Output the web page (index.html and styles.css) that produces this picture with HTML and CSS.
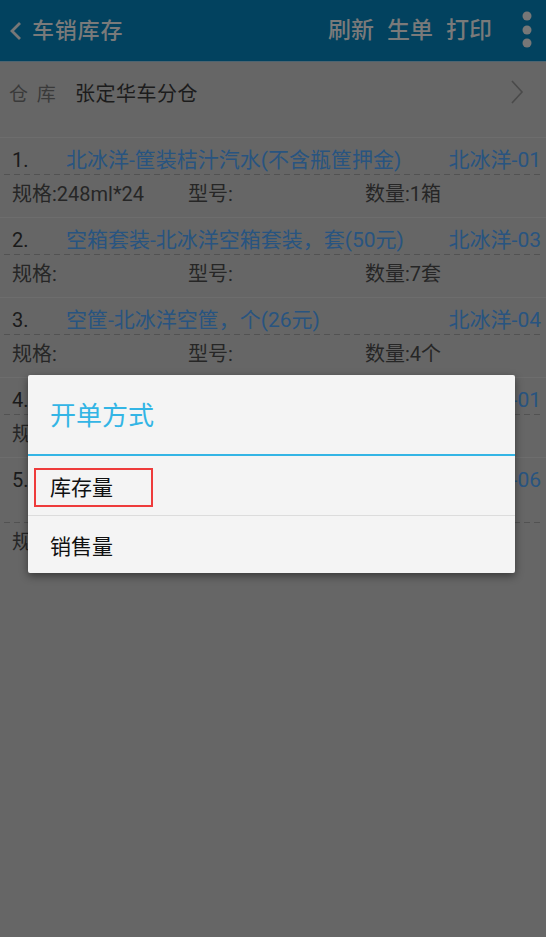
FILE: index.html
```html
<!DOCTYPE html>
<html lang="zh">
<head>
<meta charset="utf-8">
<title>车销库存</title>
<link rel="stylesheet" href="styles.css">
</head>
<body>
<div class="app">
  <header class="bar">
    <div class="bar-left">
      <svg class="back" width="14" height="20" viewBox="0 0 14 20"><polyline points="11,2 3,10 11,18" fill="none" stroke="#777777" stroke-width="2.8"/></svg>
      <span class="bar-title">车销库存</span>
    </div>
    <div class="bar-actions">
      <span>刷新</span><span>生单</span><span>打印</span>
      <svg class="more" width="10" height="38" viewBox="0 0 10 38"><circle cx="5" cy="5" r="4.5" fill="#777777"/><circle cx="5" cy="19" r="4.5" fill="#777777"/><circle cx="5" cy="32" r="4.5" fill="#777777"/></svg>
    </div>
  </header>

  <div class="store">
    <span class="store-label">仓 库</span>
    <span class="store-name">张定华车分仓</span>
    <svg class="store-arrow" width="14" height="26" viewBox="0 0 14 26"><polyline points="2,2 12,13 2,24" fill="none" stroke="#4a4a4a" stroke-width="1.6"/></svg>
  </div>

  <div class="list">
    <div class="item">
      <div class="head"><span class="no">1.</span><span class="name">北冰洋-筐装桔汁汽水(不含瓶筐押金)</span><span class="code">北冰洋-01</span></div>
      <div class="dash"></div>
      <div class="spec"><span class="c1">规格:248ml*24</span><span class="c2">型号:</span><span class="c3">数量:1箱</span></div>
    </div>
    <div class="item">
      <div class="head"><span class="no">2.</span><span class="name">空箱套装-北冰洋空箱套装，套(50元)</span><span class="code">北冰洋-03</span></div>
      <div class="dash"></div>
      <div class="spec"><span class="c1">规格:</span><span class="c2">型号:</span><span class="c3">数量:7套</span></div>
    </div>
    <div class="item">
      <div class="head"><span class="no">3.</span><span class="name">空筐-北冰洋空筐，个(26元)</span><span class="code">北冰洋-04</span></div>
      <div class="dash"></div>
      <div class="spec"><span class="c1">规格:</span><span class="c2">型号:</span><span class="c3">数量:4个</span></div>
    </div>
    <div class="item">
      <div class="head"><span class="no">4.</span><span class="name">北冰洋-瓶装桔汁汽水</span><span class="code">北冰洋-01</span></div>
      <div class="dash"></div>
      <div class="spec"><span class="c1">规格:</span><span class="c2">型号:</span><span class="c3">数量:2箱</span></div>
    </div>
    <div class="item">
      <div class="head"><span class="no">5.</span><span class="name">北冰洋-玻璃瓶装橙汁汽水(不含瓶筐押金)，箱</span><span class="code">北冰洋-06</span></div>
      <div class="dash"></div>
      <div class="spec"><span class="c1">规格:</span><span class="c2">型号:</span><span class="c3">数量:1箱</span></div>
    </div>
  </div>

  <div class="dialog">
    <div class="dialog-title">开单方式</div>
    <div class="dialog-item">库存量</div>
    <div class="dialog-item">销售量</div>
    <div class="mark"></div>
  </div>
</div>
</body>
</html>
```

FILE: styles.css
```css
* { box-sizing: border-box; }
html, body { margin: 0; padding: 0; }
body {
  width: 546px;
  height: 937px;
  overflow: hidden;
  background: #666666;
  font-family: Roboto, "Noto Sans CJK SC", sans-serif;
}
.app { position: relative; width: 546px; height: 937px; background: #666666; }

.bar {
  height: 62px;
  background: #02425f;
  border-bottom: 1px solid #4d6470;
  display: flex;
  align-items: center;
  justify-content: space-between;
  color: #7a7a7a;
}
.bar-left { display: flex; align-items: center; padding-left: 9px; }
.back { margin-right: 9px; margin-top: 1px; }
.bar-title { font-size: 22px; line-height: 28px; font-weight: 500; letter-spacing: 0.8px; }
.bar-actions { display: flex; align-items: center; gap: 13px; font-size: 23px; line-height: 28px; font-weight: 500; padding-right: 14px; }
.bar-actions .more { margin-left: 17px; margin-top: -2px; }

.store {
  height: 60px;
  display: flex;
  align-items: center;
  padding: 0 22px 0 9px;
}
.store-label { font-size: 19px; color: #3a3a3a; width: 66px; word-spacing: 4px; }
.store-name { font-size: 20px; color: #1c1c1c; flex: 1; letter-spacing: 0.5px; }

.list { margin-top: 15px; }
.item {
  border-top: 1px solid #6d6d6d;
  padding: 8px 5px 9px 12px;
}
.head { display: flex; align-items: flex-start; font-size: 21px; line-height: 28px; }
.no { width: 54px; flex: none; color: #1a1a1a; font-size: 20px; }
.name { flex: 1; color: #285480; padding-right: 30px; }
.code { flex: none; color: #285480; }
.dash {
  height: 1px;
  margin-left: -8px;
  background: repeating-linear-gradient(to right, #525252 0 6px, transparent 6px 10px);
}
.spec { display: flex; font-size: 20px; line-height: 28px; padding-top: 5px; color: #262626; }
.c1 { width: 176px; }
.c2 { width: 177px; }
.c3 { flex: 1; }

.dialog {
  position: absolute;
  left: 28px;
  top: 375px;
  width: 487px;
  background: #f4f4f4;
  border-radius: 2px;
  box-shadow: 0 3px 8px rgba(0,0,0,0.45);
}
.dialog-title {
  height: 81px;
  padding: 24px 0 0 22px;
  font-size: 26px;
  line-height: 34px;
  color: #33b5e5;
  border-bottom: 2px solid #33b5e5;
}
.dialog-item {
  height: 59px;
  padding-left: 22px;
  display: flex;
  align-items: center;
  font-size: 21px;
  color: #111111;
}
.dialog-item + .dialog-item { border-top: 1px solid #dcdcdc; height: 58px; }
.mark {
  position: absolute;
  left: 6px;
  top: 93px;
  width: 119px;
  height: 39px;
  border: 2px solid #ee3b3b;
}
```
